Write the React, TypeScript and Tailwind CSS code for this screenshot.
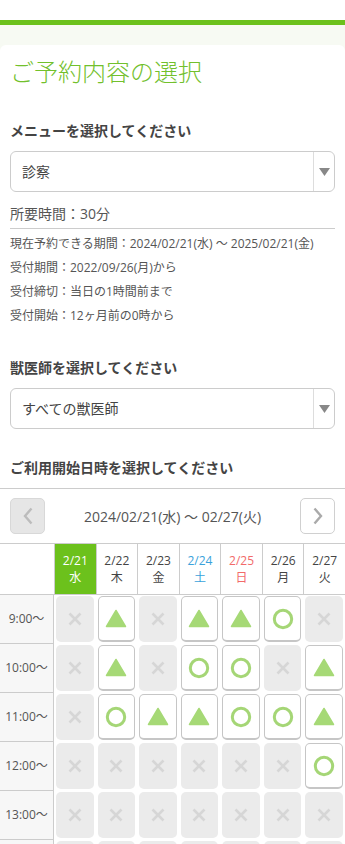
import React from "react";

type Slot = "x" | "t" | "o";

const days = [
  { d: "2/21", w: "水", kind: "sel" },
  { d: "2/22", w: "木", kind: "" },
  { d: "2/23", w: "金", kind: "" },
  { d: "2/24", w: "土", kind: "sat" },
  { d: "2/25", w: "日", kind: "sun" },
  { d: "2/26", w: "月", kind: "" },
  { d: "2/27", w: "火", kind: "" },
];

const rows: { time: string; slots: Slot[] }[] = [
  { time: "9:00〜", slots: ["x", "t", "x", "t", "t", "o", "x"] },
  { time: "10:00〜", slots: ["x", "t", "x", "o", "o", "x", "t"] },
  { time: "11:00〜", slots: ["x", "o", "t", "t", "o", "o", "t"] },
  { time: "12:00〜", slots: ["x", "x", "x", "x", "x", "x", "o"] },
  { time: "13:00〜", slots: ["x", "x", "x", "x", "x", "x", "x"] },
  { time: "", slots: ["x", "x", "x", "x", "x", "x", "x"] },
];

function SelectBox({ value }: { value: string }) {
  return (
    <div className="flex h-[41px] items-stretch rounded-[6px] border border-[#cccccc] bg-white">
      <div className="flex flex-1 items-center pl-[11px] text-[14px] text-[#444]">{value}</div>
      <div className="flex w-[21px] items-center justify-center border-l border-[#dddddd]">
        <svg width="11" height="8" viewBox="0 0 11 8">
          <polygon points="0,0 11,0 5.5,8" fill="#888" />
        </svg>
      </div>
    </div>
  );
}

function Cell({ s }: { s: Slot }) {
  if (s === "x") {
    return (
      <div className="flex h-[46px] items-center justify-center rounded-[5px] bg-[#ebebeb]">
        <svg width="14" height="14" viewBox="0 0 14 14">
          <path d="M1.5 1.5 L12.5 12.5 M12.5 1.5 L1.5 12.5" stroke="#d6d6d6" strokeWidth="2.6" />
        </svg>
      </div>
    );
  }
  return (
    <div className="flex h-[46px] items-center justify-center rounded-[5px] border border-b-2 border-[#c6c6c6] bg-white">
      {s === "t" ? (
        <svg width="22" height="19" viewBox="0 0 22 19">
          <polygon
            points="11,1.5 20.5,17.5 1.5,17.5"
            fill="#a6d976"
            stroke="#a6d976"
            strokeWidth="1.5"
            strokeLinejoin="round"
          />
        </svg>
      ) : (
        <svg width="22" height="22" viewBox="0 0 22 22">
          <circle cx="11" cy="11" r="8.7" fill="none" stroke="#a5d676" strokeWidth="3" />
        </svg>
      )}
    </div>
  );
}

export default function App() {
  return (
    <div
      className="min-h-screen bg-white"
      style={{ fontFamily: '"Open Sans", "Noto Sans CJK JP", sans-serif' }}
    >
      <div className="h-5 bg-white" />
      <div className="h-[5px] bg-[#6cc11c]" />
      <div className="bg-[#f7faf3] pt-5">
        <div className="overflow-hidden rounded-t-[6px] bg-white">
          <div className="px-[10px] pt-[11px]">
            <h1 className="text-[24px] font-light leading-[32px] text-[#72c02c]">ご予約内容の選択</h1>

            <h2 className="mt-[33px] text-[14px] font-bold leading-[20px] text-[#444]">
              メニューを選択してください
            </h2>
            <div className="mt-[10px]">
              <SelectBox value="診察" />
            </div>
            <p className="mt-[12px] text-[14px] leading-[20px] text-[#555]">所要時間：30分</p>
            <div className="mt-1 h-px bg-[#cccccc]" />

            <div className="mt-[3px] text-[12px] leading-[24px] text-[#555]">
              <p>現在予約できる期間：2024/02/21(水) 〜 2025/02/21(金)</p>
              <p>受付期間：2022/09/26(月)から</p>
              <p>受付締切：当日の1時間前まで</p>
              <p>受付開始：12ヶ月前の0時から</p>
            </div>

            <h2 className="mt-[30px] text-[14px] font-bold leading-[20px] text-[#444]">
              獣医師を選択してください
            </h2>
            <div className="mt-[10px]">
              <SelectBox value="すべての獣医師" />
            </div>

            <h2 className="mt-[29px] text-[14px] font-bold leading-[20px] text-[#444]">
              ご利用開始日時を選択してください
            </h2>
          </div>
          <div className="mt-[10px] h-px bg-[#cccccc]" />

          <div className="mt-[9px] flex items-center justify-between px-[10px]">
            <button className="flex h-9 w-[35px] items-center justify-center rounded-[5px] border border-[#d8d8d8] bg-[#e6e6e6]">
              <svg width="10" height="18" viewBox="0 0 10 18">
                <path d="M8.5 1.5 L2 9 L8.5 16.5" fill="none" stroke="#bcbcbc" strokeWidth="2.4" />
              </svg>
            </button>
            <span className="text-[14px] text-[#555]">2024/02/21(水) 〜 02/27(火)</span>
            <button className="flex h-9 w-[35px] items-center justify-center rounded-[5px] border border-[#d0d0d0] bg-white">
              <svg width="10" height="18" viewBox="0 0 10 18">
                <path d="M1.5 1.5 L8 9 L1.5 16.5" fill="none" stroke="#aaaaaa" strokeWidth="2.4" />
              </svg>
            </button>
          </div>

          <div className="mt-[9px] grid grid-cols-[54px_repeat(7,1fr)] border-t border-[#cccccc]">
            <div className="h-[51px] border-b border-[#cccccc]" />
            {days.map((d) => (
              <div
                key={d.d}
                className={
                  "flex h-[51px] flex-col items-center justify-center border-b border-l border-[#cccccc] text-[12px] leading-[17px] " +
                  (d.kind === "sel"
                    ? "bg-[#6cc11c] text-white"
                    : d.kind === "sat"
                    ? "text-[#3aa2db]"
                    : d.kind === "sun"
                    ? "text-[#f26a6a]"
                    : "text-[#444]")
                }
              >
                <span>{d.d}</span>
                <span>{d.w}</span>
              </div>
            ))}

            {rows.map((r, ri) => (
              <React.Fragment key={ri}>
                <div className="flex h-[49px] items-center justify-center border-r border-b border-[#cccccc] bg-[#f7f7f7] text-[12px] text-[#555]">
                  {r.time}
                </div>
                {r.slots.map((s, i) => (
                  <div key={i} className="h-[49px] px-[2px] pt-px">
                    <Cell s={s} />
                  </div>
                ))}
              </React.Fragment>
            ))}
          </div>
        </div>
      </div>
    </div>
  );
}
